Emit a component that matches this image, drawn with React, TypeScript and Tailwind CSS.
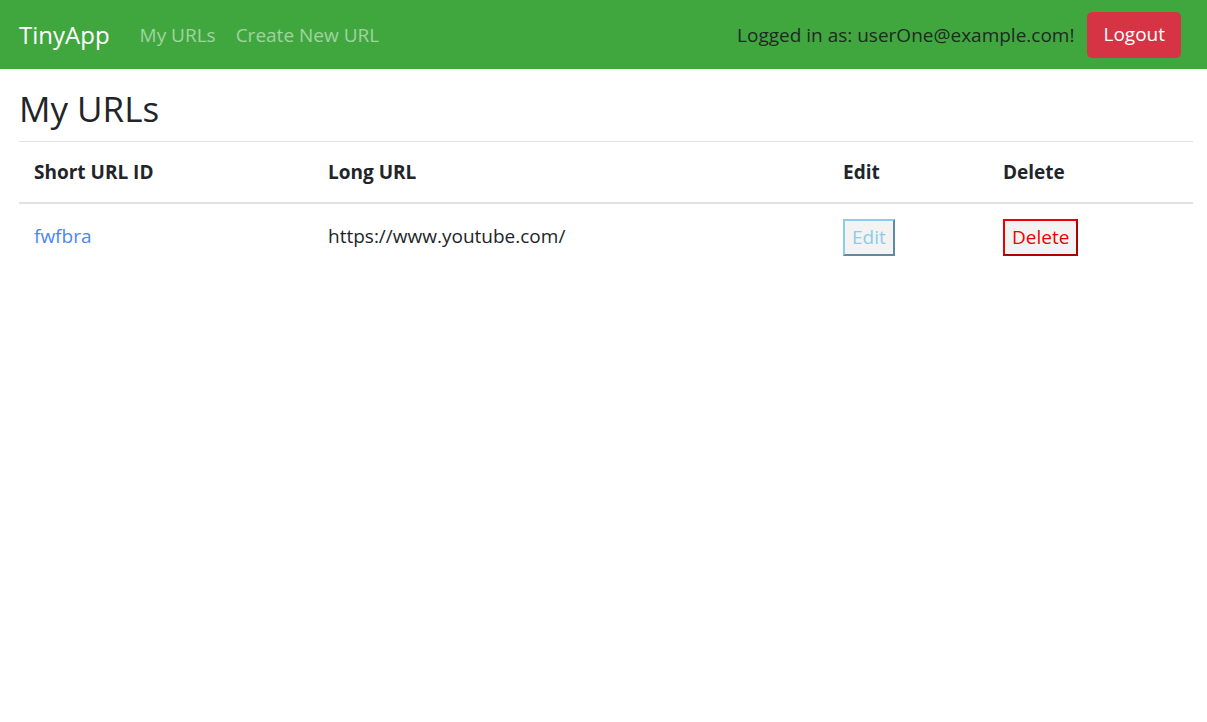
const urls = [{ id: "fwfbra", longURL: "https://www.youtube.com/" }];

export default function App() {
  return (
    <div className="min-h-screen bg-white text-[#212529] font-['Open_Sans',sans-serif]">
      {/* navbar */}
      <nav className="h-[69px] bg-[#40a73f] flex items-center pl-[19px] pr-[26px] pt-[1px]">
        <a href="#" className="text-white text-[24px] mr-[30px]">TinyApp</a>
        <a href="#" className="text-[#a0d49f] text-[19px] mr-[20px]">My URLs</a>
        <a href="#" className="text-[#a0d49f] text-[19px]">Create New URL</a>
        <div className="ml-auto flex items-center">
          <span className="text-[19px] text-[#1f2a22] mr-[13px]">Logged in as: userOne@example.com!</span>
          <button className="h-[46px] px-[16px] rounded-[5px] bg-[#d63344] text-white text-[19px] -mt-[1px]">Logout</button>
        </div>
      </nav>

      <main className="px-[19px] pr-[14px]">
        <h2 className="text-[35px] font-medium leading-none pt-[22px] pb-[15px] border-b border-[#dee2e6]">My URLs</h2>
        <table className="w-full border-collapse text-[19px]">
          <thead>
            <tr className="border-b-2 border-[#dee2e6] h-[61px]">
              <th className="w-[294px] text-left font-bold pl-[15px]">Short URL ID</th>
              <th className="w-[515px] text-left font-bold pl-[15px]">Long URL</th>
              <th className="w-[160px] text-left font-bold pl-[15px]">Edit</th>
              <th className="text-left font-bold pl-[15px]">Delete</th>
            </tr>
          </thead>
          <tbody>
            {urls.map((u) => (
              <tr key={u.id} className="align-top">
                <td className="pl-[15px] pt-[18px]">
                  <a href="#" className="text-[#4a86f5]">{u.id}</a>
                </td>
                <td className="pl-[15px] pt-[18px]">{u.longURL}</td>
                <td className="pl-[15px] pt-[15px]">
                  <button className="h-[37px] px-[7px] bg-[#f3f3f3] text-[#8ecbea] border-2 border-t-[#8ecbea] border-l-[#8ecbea] border-b-[#5f8aa4] border-r-[#5f8aa4]">Edit</button>
                </td>
                <td className="pl-[15px] pt-[15px]">
                  <button className="h-[37px] px-[7px] bg-[#f3f3f3] text-[#ee0000] border-2 border-t-[#ee0000] border-l-[#ee0000] border-b-[#b00000] border-r-[#b00000]">Delete</button>
                </td>
              </tr>
            ))}
          </tbody>
        </table>
      </main>
    </div>
  );
}
